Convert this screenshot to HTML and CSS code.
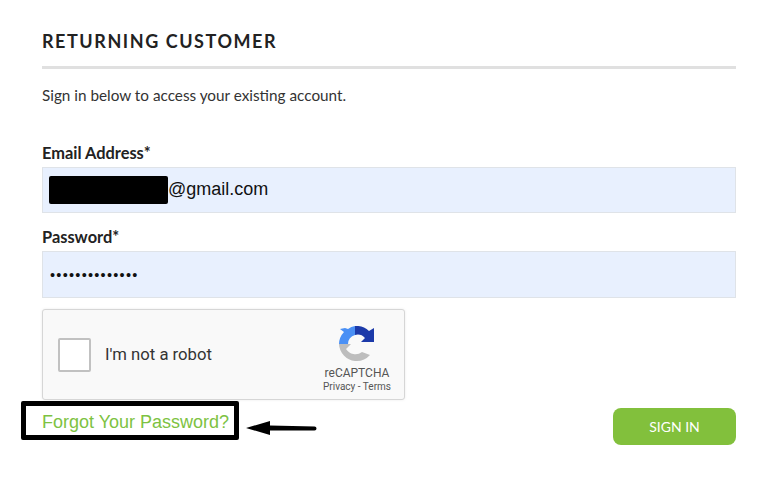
FILE: index.html
```html
<!DOCTYPE html>
<html>
<head>
    <link rel="stylesheet" href="styles.css">
</head>
<body>
    <div class="signin">
        <h2 class="signin-title">RETURNING CUSTOMER</h2>
        <p class="signin-intro">Sign in below to access your existing account.</p>

        <label class="field-label">Email Address*</label>
        <div class="field-box field-email">
            <span class="redacted"></span><span class="field-value">@gmail.com</span>
        </div>

        <label class="field-label field-label-second">Password*</label>
        <div class="field-box field-password">••••••••••••••</div>

        <div class="captcha">
            <span class="captcha-check"></span>
            <span class="captcha-text">I'm not a robot</span>
            <div class="captcha-brand">
                <svg class="captcha-logo" viewBox="0 0 36 36" width="36" height="36">
                    <path fill="#4a90f5" d="M16 0 L16 9 A9 9 0 0 0 9 18 L0 18 A18 18 0 0 1 5 6 L1 3 L6 2 L9 3 A18 18 0 0 1 16 0 Z"/>
                    <path fill="#1c3aa9" d="M16 0 A18 18 0 0 1 30 5 L35 2 L35 16 L22 16 L26 12 A10 10 0 0 0 16 9 Z"/>
                    <path fill="#bdbdbd" d="M0 18 L12 18 L7 23 A11 11 0 0 0 23 26 L31 29 A18 18 0 0 1 16 35 A18 18 0 0 1 0 18 Z"/>
                </svg>
                <div class="captcha-name">reCAPTCHA</div>
                <div class="captcha-links">Privacy - Terms</div>
            </div>
        </div>

        <div class="signin-footer">
            <div class="forgot-wrap">
                <a class="forgot-link" href="#">Forgot Your Password?</a>
                <svg class="forgot-arrow" viewBox="0 0 72 16" width="72" height="16">
                    <path fill="#000" d="M0 8 L24 1 L24 5.5 L68.5 6.5 A2 2 0 0 1 68.5 10.5 L24 10.5 L24 15 Z"/>
                </svg>
            </div>
            <button class="signin-btn">SIGN IN</button>
        </div>
    </div>
</body>
</html>
```

FILE: styles.css
```css
* {
    box-sizing: border-box;
}

body {
    margin: 0;
    background: #fff;
    font-family: Lato, sans-serif;
    color: #222;
}

.signin {
    width: 694px;
    margin-left: 42px;
    padding-top: 30px;
}

.signin-title {
    margin: 0;
    padding-bottom: 14px;
    border-bottom: 3px solid #e0e0e0;
    font-size: 18px;
    line-height: 22px;
    font-weight: 700;
    letter-spacing: 1.55px;
}

.signin-intro {
    margin: 16px 0 0;
    font-size: 15.3px;
    line-height: 20px;
    color: #333;
}

.field-label {
    display: block;
    margin-top: 38px;
    margin-bottom: 4px;
    font-size: 16.4px;
    line-height: 20px;
    font-weight: 700;
}

.field-label-second {
    margin-top: 14px;
}

.field-box {
    display: flex;
    align-items: center;
    height: 46px;
    padding-left: 6px;
    background: #e8f0fe;
    border: 1px solid #dfe3e8;
    font-family: "Liberation Sans", Arial, sans-serif;
    font-size: 18px;
    color: #111;
}

.field-value {
    margin-bottom: 2px;
}

.field-password {
    height: 47px;
    padding-left: 7px;
    font-size: 14.5px;
    letter-spacing: 1.25px;
}

.redacted {
    width: 119px;
    height: 28px;
    background: #000;
    border-radius: 2px;
}

.captcha {
    display: flex;
    align-items: center;
    width: 363px;
    height: 91px;
    margin-top: 11px;
    padding-left: 15px;
    background: #f9f9f9;
    border: 1px solid #d6d6d6;
    border-radius: 3px;
    box-shadow: 0 0 3px rgba(0, 0, 0, 0.08);
}

.captcha-check {
    width: 33px;
    height: 34px;
    background: #fff;
    border: 2px solid #c1c1c1;
    border-radius: 2px;
}

.captcha-text {
    margin-left: 14px;
    font-family: Roboto, sans-serif;
    font-size: 16.7px;
    color: #333;
}

.captcha-brand {
    display: flex;
    flex-direction: column;
    align-items: center;
    width: 70px;
    margin-left: auto;
    margin-right: 12px;
    margin-top: 10px;
    font-family: Roboto, sans-serif;
    color: #555;
}

.captcha-logo {
    display: block;
    margin-bottom: 4px;
}

.captcha-name {
    font-size: 12px;
    line-height: 14px;
}

.captcha-links {
    font-size: 10px;
    line-height: 14px;
    white-space: nowrap;
}

.signin-footer {
    display: flex;
    justify-content: space-between;
    align-items: flex-start;
    margin-top: 1px;
    margin-left: -21px;
}

.forgot-wrap {
    display: flex;
    align-items: center;
}

.forgot-link {
    display: block;
    width: 218px;
    height: 39px;
    padding-left: 16px;
    border: 5px solid #000;
    border-radius: 2px;
    font-family: "Liberation Sans", Arial, sans-serif;
    font-size: 18px;
    line-height: 32px;
    color: #7dc242;
    text-decoration: none;
}

.forgot-arrow {
    margin-left: 7px;
    margin-top: 14px;
}

.signin-btn {
    width: 123px;
    height: 37px;
    margin-top: 7px;
    background: #82c03c;
    border: 0;
    border-radius: 8px;
    font-family: Lato, sans-serif;
    font-size: 14px;
    color: #fff;
}
```
